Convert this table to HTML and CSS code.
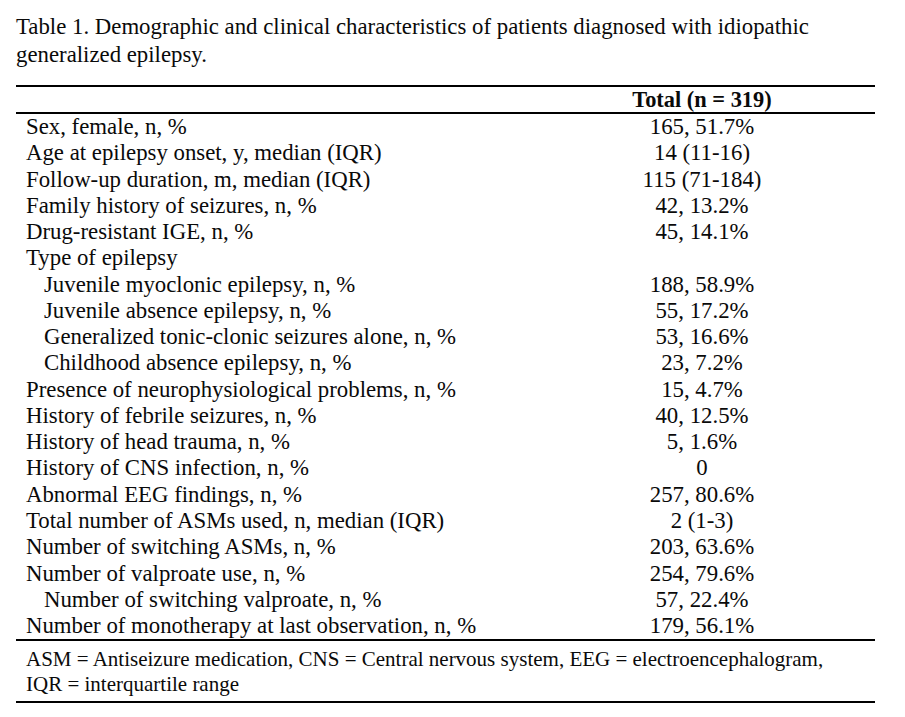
FILE: index.html
```html
<!DOCTYPE html>
<html lang="en">
<head>
<meta charset="utf-8">
<title>Table 1</title>
<link rel="stylesheet" href="styles.css">
</head>
<body>
<div class="page">
  <p class="caption">Table 1. Demographic and clinical characteristics of patients diagnosed with idiopathic generalized epilepsy.</p>
  <table class="data">
    <thead>
      <tr><th class="label"></th><th class="value">Total (n = 319)</th></tr>
    </thead>
    <tbody>
      <tr><td class="label">Sex, female, n, %</td><td class="value">165, 51.7%</td></tr>
      <tr><td class="label">Age at epilepsy onset, y, median (IQR)</td><td class="value">14 (11-16)</td></tr>
      <tr><td class="label">Follow-up duration, m, median (IQR)</td><td class="value">115 (71-184)</td></tr>
      <tr><td class="label">Family history of seizures, n, %</td><td class="value">42, 13.2%</td></tr>
      <tr><td class="label">Drug-resistant IGE, n, %</td><td class="value">45, 14.1%</td></tr>
      <tr><td class="label">Type of epilepsy</td><td class="value"></td></tr>
      <tr><td class="label sub">Juvenile myoclonic epilepsy, n, %</td><td class="value">188, 58.9%</td></tr>
      <tr><td class="label sub">Juvenile absence epilepsy, n, %</td><td class="value">55, 17.2%</td></tr>
      <tr><td class="label sub">Generalized tonic-clonic seizures alone, n, %</td><td class="value">53, 16.6%</td></tr>
      <tr><td class="label sub">Childhood absence epilepsy, n, %</td><td class="value">23, 7.2%</td></tr>
      <tr><td class="label">Presence of neurophysiological problems, n, %</td><td class="value">15, 4.7%</td></tr>
      <tr><td class="label">History of febrile seizures, n, %</td><td class="value">40, 12.5%</td></tr>
      <tr><td class="label">History of head trauma, n, %</td><td class="value">5, 1.6%</td></tr>
      <tr><td class="label">History of CNS infection, n, %</td><td class="value">0</td></tr>
      <tr><td class="label">Abnormal EEG findings, n, %</td><td class="value">257, 80.6%</td></tr>
      <tr><td class="label">Total number of ASMs used, n, median (IQR)</td><td class="value">2 (1-3)</td></tr>
      <tr><td class="label">Number of switching ASMs, n, %</td><td class="value">203, 63.6%</td></tr>
      <tr><td class="label">Number of valproate use, n, %</td><td class="value">254, 79.6%</td></tr>
      <tr><td class="label sub">Number of switching valproate, n, %</td><td class="value">57, 22.4%</td></tr>
      <tr><td class="label">Number of monotherapy at last observation, n, %</td><td class="value">179, 56.1%</td></tr>
    </tbody>
    <tfoot>
      <tr><td class="note" colspan="2">ASM = Antiseizure medication, CNS = Central nervous system, EEG = electroencephalogram,<br>IQR = interquartile range</td></tr>
    </tfoot>
  </table>
</div>
</body>
</html>
```

FILE: styles.css
```css
html, body {
  margin: 0;
  padding: 0;
  background: #ffffff;
}

body {
  font-family: "Liberation Serif", "Times New Roman", serif;
  color: #0a0a0a;
}

.page {
  width: 859px;
  padding: 13px 0 0 16px;
}

.caption {
  margin: 0 0 16px 0;
  font-size: 22.8px;
  line-height: 28px;
  width: 850px;
}

.data {
  width: 859px;
  border-collapse: collapse;
  table-layout: fixed;
}

.data th,
.data td {
  padding: 0;
  font-size: 22.8px;
  line-height: 26.26px;
  vertical-align: top;
}

.data th.label,
.data td.label {
  width: 503px;
  text-align: left;
  padding-left: 10px;
  white-space: nowrap;
}

.data td.label.sub {
  padding-left: 28px;
}

.data th.value,
.data td.value {
  width: 346px;
  text-align: center;
  white-space: nowrap;
}

.data thead tr {
  border-top: 2px solid #000;
  border-bottom: 2px solid #000;
}

.data thead th {
  font-size: 22.4px;
  font-weight: bold;
  height: 25px;
  line-height: 25px;
}

.data tfoot tr {
  border-top: 2px solid #000;
  border-bottom: 2px solid #000;
}

.data td.note {
  font-size: 21px;
  line-height: 25px;
  padding: 6px 0 4px 10px;
  text-align: left;
}
```
